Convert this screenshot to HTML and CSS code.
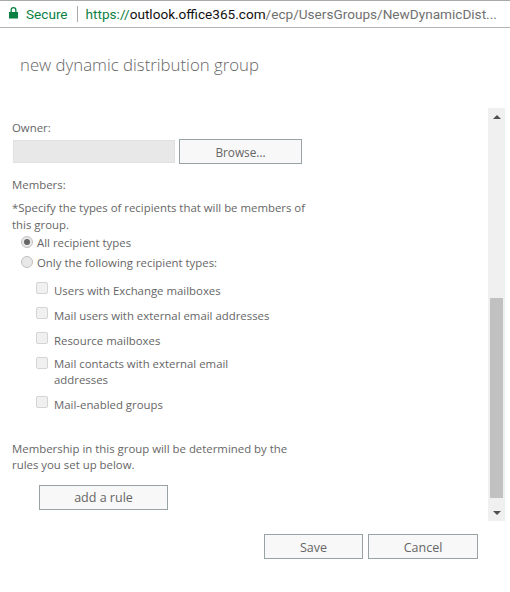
FILE: index.html
```html
<!DOCTYPE html>
<html lang="en">
<head>
  <meta charset="utf-8"/>
  <title>new dynamic distribution group</title>
  <link rel="stylesheet" href="styles.css">
</head>
<body>

  <!-- Address bar -->
  <div class="address-bar">
    <svg class="lock" width="9" height="12" viewBox="0 0 9 12">
      <path d="M0 5h9v6.500h-9z M1.500 5v-2a3 3 0 0 1 6 0v2h-1.300v-2a1.700 1.700 0 0 0-3.400 0v2z" fill="#0b8043"/>
    </svg>
    <span class="secure">Secure</span>
    <span class="divider"></span>
    <span class="url"><span class="scheme">https://</span><span class="host">outlook.office365.com</span>/ecp/UsersGroups/NewDynamicDist...</span>
  </div>

  <h1 class="title">new dynamic distribution group</h1>

  <!-- Scrolling form -->
  <div class="panel">
    <form class="form">
      <div class="label owner-label">Owner:</div>
      <div class="owner-row">
        <div class="owner-input"></div>
        <button type="button" class="btn browse-btn">Browse...</button>
      </div>

      <div class="label members-label">Members:</div>
      <p class="hint">*Specify the types of recipients that will be members of this group.</p>

      <div class="radio-row">
        <span class="radio checked"></span>
        <span>All recipient types</span>
      </div>
      <div class="radio-row">
        <span class="radio"></span>
        <span>Only the following recipient types:</span>
      </div>

      <ul class="checks">
        <li><span class="check"></span><span class="check-label">Users with Exchange mailboxes</span></li>
        <li><span class="check"></span><span class="check-label">Mail users with external email addresses</span></li>
        <li><span class="check"></span><span class="check-label">Resource mailboxes</span></li>
        <li><span class="check"></span><span class="check-label two-lines">Mail contacts with external email<br>addresses</span></li>
        <li><span class="check"></span><span class="check-label">Mail-enabled groups</span></li>
      </ul>

      <p class="rules-note">Membership in this group will be determined by the rules you set up below.</p>
      <button type="button" class="btn add-rule-btn">add a rule</button>
    </form>

    <div class="scrollbar">
      <span class="arrow up"></span>
      <div class="track"><div class="thumb"></div></div>
      <span class="arrow down"></span>
    </div>
  </div>

  <!-- Footer buttons -->
  <div class="actions">
    <button type="button" class="btn save-btn">Save</button>
    <button type="button" class="btn cancel-btn">Cancel</button>
  </div>

</body>
</html>
```

FILE: styles.css
```css
/* -------------------- Base -------------------- */
* { box-sizing: border-box; }
html, body {
  margin: 0;
  padding: 0;
  background: #fff;
  color: #666;
  font-family: "Open Sans", "Noto Sans", sans-serif;
  font-size: 11.4px;
}
body { height: 592px; overflow: hidden; }

/* -------------------- Address bar -------------------- */
.address-bar {
  display: flex;
  align-items: center;
  height: 28px;
  padding-left: 9px;
  border-top: 1px solid #a9a9a9;
  border-bottom: 1px solid #b4b4b4;
  font-family: "Roboto", sans-serif;
  font-size: 13.6px;
  white-space: nowrap;
}
.lock { flex: none; margin-bottom: 2px; }
.secure { margin-left: 8px; color: #0b8043; }
.divider {
  width: 1px;
  height: 16px;
  margin: 0 8px 0 9px;
  background: #a9a9a9;
}
.url { color: #707070; }
.scheme { color: #0b8043; }
.host { color: #111; }

/* -------------------- Title -------------------- */
.title {
  margin: 27px 0 0 20px;
  font-size: 16.8px;
  font-weight: 300;
  line-height: 20px;
  color: #666;
}

/* -------------------- Panel -------------------- */
.panel {
  display: flex;
  justify-content: space-between;
  height: 413px;
  margin-top: 33px;
  padding-right: 5px;
}
.form { width: 320px; padding: 12px 0 0 12px; }
.label { line-height: 16px; }
.owner-row {
  display: flex;
  align-items: center;
  gap: 4px;
  margin-top: 3px;
  padding-left: 1px;
}
.owner-input {
  width: 162px;
  height: 23px;
  background: #e8e8e8;
  border: 1px solid #e0e0e0;
}
.members-label { margin-top: 13px; }
.hint {
  width: 296px;
  margin: 6px 0 0;
  line-height: 17px;
}

/* -------------------- Buttons -------------------- */
.btn {
  height: 25px;
  padding: 0;
  background: #f8f8f8;
  border: 1px solid #98a3a6;
  color: #666;
  font-family: inherit;
  font-size: 12.5px;
}
.browse-btn { width: 123px; font-size: 11.8px; }
.add-rule-btn { display: block; width: 129px; margin: 12px 0 0 27px; }
.save-btn { width: 99px; padding-top: 1px; }
.cancel-btn { width: 110px; padding-top: 1px; }

/* -------------------- Radios -------------------- */
.radio-row {
  display: flex;
  align-items: center;
  gap: 4px;
  height: 20px;
  padding-left: 9px;
}
.hint + .radio-row { margin-top: -1px; }
.radio {
  position: relative;
  width: 12px;
  height: 12px;
  border: 1px solid #c0c0c0;
  border-radius: 50%;
  background: #e8e8e8;
}
.radio.checked::after {
  content: "";
  position: absolute;
  top: 2px;
  left: 2px;
  width: 6px;
  height: 6px;
  border-radius: 50%;
  background: #666;
}

/* -------------------- Checkboxes -------------------- */
.checks {
  list-style: none;
  margin: 10px 0 0;
  padding: 0 0 0 24px;
}
.checks li {
  display: flex;
  gap: 6px;
  margin-bottom: 8px;
  line-height: 16px;
}
.check {
  flex: none;
  width: 12px;
  height: 12px;
  border: 1px solid #d4d4d4;
  border-radius: 2px;
  background: #f0f0f0;
}
.check-label { margin-top: 1px; }
.check-label.two-lines { margin-top: -1px; }
.rules-note {
  width: 290px;
  margin: 28px 0 0;
  line-height: 16px;
}

/* -------------------- Scrollbar -------------------- */
.scrollbar {
  display: flex;
  flex-direction: column;
  align-items: center;
  width: 17px;
  background: #f0f0f0;
}
.arrow {
  flex: none;
  width: 0;
  height: 0;
  margin: 6px 0;
  border-left: 4px solid transparent;
  border-right: 4px solid transparent;
}
.arrow.up { margin-top: 7px; border-bottom: 4px solid #505050; }
.arrow.down { border-top: 4px solid #505050; }
.track {
  flex: 1;
  display: flex;
  align-items: flex-end;
  width: 13px;
}
.thumb { width: 13px; height: 200px; margin-bottom: 7px; background: #c1c1c1; }

/* -------------------- Footer -------------------- */
.actions {
  display: flex;
  justify-content: flex-end;
  gap: 5px;
  margin-top: 13px;
  padding-right: 32px;
}
```
